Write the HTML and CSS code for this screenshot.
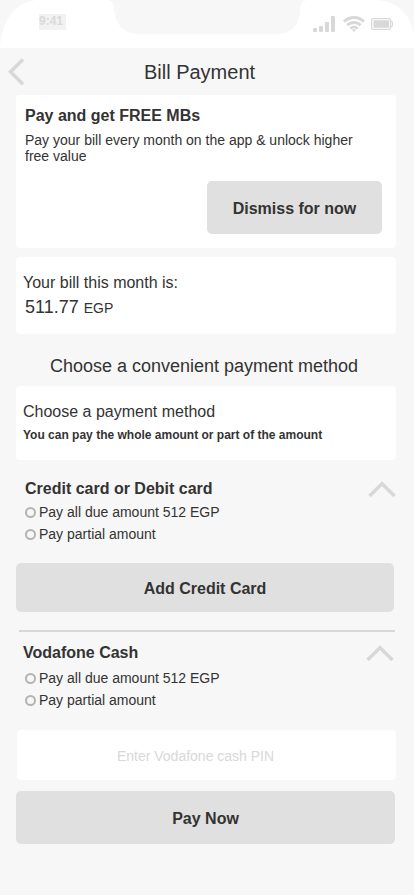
FILE: index.html
```html
<!DOCTYPE html>
<html lang="en">
<head>
<meta charset="utf-8">
<meta name="viewport" content="width=device-width, initial-scale=1">
<title>Bill Payment</title>
<link rel="stylesheet" href="styles.css">
</head>
<body>
<div class="status-bar">
  <span class="time">9:41</span>
  <svg class="notch" width="200" height="34" viewBox="0 0 200 34" aria-hidden="true">
    <path d="M1 0C5 1 7 4 7 9C8 25 18 34 32 34H169C184 34 192 25 193 11C193 5 195 1 200 0Z" fill="#f7f7f7"/>
  </svg>
  <div class="indicators">
    <svg class="signal" width="22" height="16" viewBox="0 0 22 16" fill="#d8d8d8" aria-hidden="true">
      <rect x="0" y="12" width="4" height="4" rx="1"/>
      <rect x="6" y="10" width="4" height="6" rx="1"/>
      <rect x="12" y="6" width="4" height="10" rx="1"/>
      <rect x="18" y="0" width="4" height="16" rx="1"/>
    </svg>
    <svg class="wifi" width="23" height="16" viewBox="-1 0 23 16" fill="none" stroke="#d8d8d8" stroke-width="3" aria-hidden="true">
      <path d="M1 5.600C6.800 .2 15.200 .2 21 5.600"/>
      <path d="M4.300 9.200C8.200 5.500 13.800 5.500 17.700 9.200"/>
      <path d="M7.300 12.600C9.500 10.400 12.500 10.400 14.700 12.600" stroke-width="2.600"/>
      <path d="M8.600 13.800Q11 12.600 13.400 13.800L11 16Z" fill="#d8d8d8" stroke="none"/>
    </svg>
    <svg class="battery" width="22" height="12" viewBox="0 0 22 12" aria-hidden="true">
      <rect x=".6" y=".6" width="18.800" height="10.800" rx="1.600" fill="#fff" stroke="#d8d8d8" stroke-width="1.200"/>
      <rect x="2.500" y="2.300" width="15.500" height="7.400" rx=".6" fill="#d8d8d8"/>
      <path d="M20 3C22 3.600 22 8.400 20 9" fill="none" stroke="#d8d8d8" stroke-width="1.200"/>
    </svg>
  </div>
</div>

<header class="app-header">
  <button class="icon-button" type="button" aria-label="Back">
    <svg width="16" height="28" viewBox="0 0 16 28" fill="none" stroke="#d8d8d8" stroke-width="3.600" aria-hidden="true"><path d="M15 1.500L2.500 13.800L15 26.300"/></svg>
  </button>
  <h1>Bill Payment</h1>
</header>

<main>
  <section class="card promo">
    <h2>Pay and get FREE MBs</h2>
    <p>Pay your bill every month on the app &amp; unlock higher free value</p>
    <button class="button" type="button">Dismiss for now</button>
  </section>

  <section class="card bill">
    <p class="lead">Your bill this month is:</p>
    <p class="amount">511.77 <span>EGP</span></p>
  </section>

  <h2 class="section-title">Choose a convenient payment method</h2>

  <section class="card method">
    <p class="lead">Choose a payment method</p>
    <p class="note">You can pay the whole amount or part of the amount</p>
  </section>

  <section class="option card-option">
    <div class="option-head">
      <h2>Credit card or Debit card</h2>
      <button class="icon-button" type="button" aria-label="Collapse card payment">
        <svg width="28" height="17" viewBox="0 0 28 17" fill="none" stroke="#d8d8d8" stroke-width="3.600" aria-hidden="true"><path d="M1.500 15L14 2.800L26.500 15"/></svg>
      </button>
    </div>
    <label class="choice"><input type="radio" name="card-amount">Pay all due amount 512 EGP</label>
    <label class="choice"><input type="radio" name="card-amount">Pay partial amount</label>
    <button class="button add-card" type="button">Add Credit Card</button>
  </section>

  <hr>

  <section class="option cash-option">
    <div class="option-head">
      <h2>Vodafone Cash</h2>
      <button class="icon-button" type="button" aria-label="Collapse Vodafone Cash">
        <svg width="28" height="17" viewBox="0 0 28 17" fill="none" stroke="#d8d8d8" stroke-width="3.600" aria-hidden="true"><path d="M1.500 15L14 2.800L26.500 15"/></svg>
      </button>
    </div>
    <label class="choice"><input type="radio" name="cash-amount">Pay all due amount 512 EGP</label>
    <label class="choice"><input type="radio" name="cash-amount">Pay partial amount</label>
    <input class="pin" type="text" inputmode="numeric" aria-label="Vodafone cash PIN" placeholder="Enter Vodafone cash PIN">
    <button class="button pay" type="button">Pay Now</button>
  </section>
</main>
</body>
</html>
```
FILE: styles.css
```css
* {
  box-sizing: border-box;
}

body {
  margin: 0;
  background: #f7f7f7;
  color: #333;
  font: 14px/16px "Liberation Sans", Arial, sans-serif;
}

h1, h2, p {
  margin: 0;
}

h2 {
  font-size: 16px;
  line-height: 22px;
}

button, input {
  font: inherit;
  color: inherit;
}

svg {
  display: block;
}

.status-bar {
  display: grid;
  grid-template-columns: 1fr 200px 1fr;
  align-items: start;
  height: 48px;
  background: #fff;
  border-radius: 38px 38px 0 0 / 48px 38px 0 0;
}

.time {
  justify-self: start;
  width: 27px;
  height: 16px;
  margin: 14px 0 0 39px;
  background: #f2f2f2;
  color: #dadada;
  font-size: 12px;
  font-weight: bold;
  line-height: 14px;
}

.indicators {
  display: flex;
  align-items: center;
  justify-content: flex-end;
  gap: 6px;
  padding: 16px 21px 0 0;
}

.signal {
  margin-right: 1px;
}

.app-header {
  display: flex;
  align-items: center;
  height: 47px;
  padding: 0 39px 0 8px;
}

h1 {
  flex: 1;
  font-size: 20px;
  font-weight: normal;
  line-height: 24px;
  text-align: center;
}

.icon-button {
  padding: 0;
  border: 0;
  background: none;
}

main {
  padding: 0 18px 48px 16px;
}

.card {
  background: #fff;
  border-radius: 4px;
}

.promo {
  display: flex;
  flex-direction: column;
  padding: 10px 14px 14px 9px;
}

.promo p {
  margin: 5px 0 17px;
  padding-right: 20px;
}

.button {
  display: block;
  width: 100%;
  height: 53px;
  padding: 2px 0 0;
  border: 0;
  border-radius: 5px;
  background: #e0e0e0;
  font-size: 16px;
  font-weight: bold;
}

.promo .button {
  align-self: flex-end;
  width: 175px;
}

.lead {
  font-size: 16px;
  line-height: 22px;
}

.bill {
  margin-top: 9px;
  padding: 15px 7px 13px;
}

.amount {
  padding-left: 2px;
  font-size: 18px;
  line-height: 26px;
}

.amount span {
  font-size: 14px;
}

.section-title {
  margin: 20px 0 8px;
  padding-right: 4px;
  font-size: 18px;
  font-weight: normal;
  line-height: 24px;
  text-align: center;
}

.method {
  padding: 15px 7px 17px;
}

.note {
  margin-top: 4px;
  font-size: 12px;
  font-weight: bold;
}

.option-head {
  display: flex;
  align-items: center;
  justify-content: space-between;
  margin-bottom: 1px;
  padding-left: 9px;
}

.cash-option .option-head {
  margin-bottom: 3px;
  padding: 0 2px 0 7px;
}

.card-option {
  margin-top: 18px;
}

.choice {
  display: flex;
  align-items: center;
  gap: 3px;
  padding-left: 9px;
  line-height: 22px;
}

.choice input {
  appearance: none;
  width: 11px;
  height: 11px;
  margin: 0;
  border: 2px solid #b3b3b3;
  border-radius: 50%;
}

.choice input:checked {
  background: #333;
}

.add-card {
  width: calc(100% - 2px);
  height: 49px;
  margin-top: 18px;
}

hr {
  height: 2px;
  margin: 18px 1px 10px 3px;
  border: 0;
  background: #d8d8d8;
}

.pin {
  display: block;
  width: calc(100% - 1px);
  height: 50px;
  margin: 19px 0 11px 1px;
  padding: 2px 22px 0 0;
  border: 0;
  border-radius: 4px;
  background: #fff;
  text-align: center;
}

.pin::placeholder {
  color: #d8d8d8;
  opacity: 1;
}

.pay {
  width: calc(100% - 1px);
}
```
